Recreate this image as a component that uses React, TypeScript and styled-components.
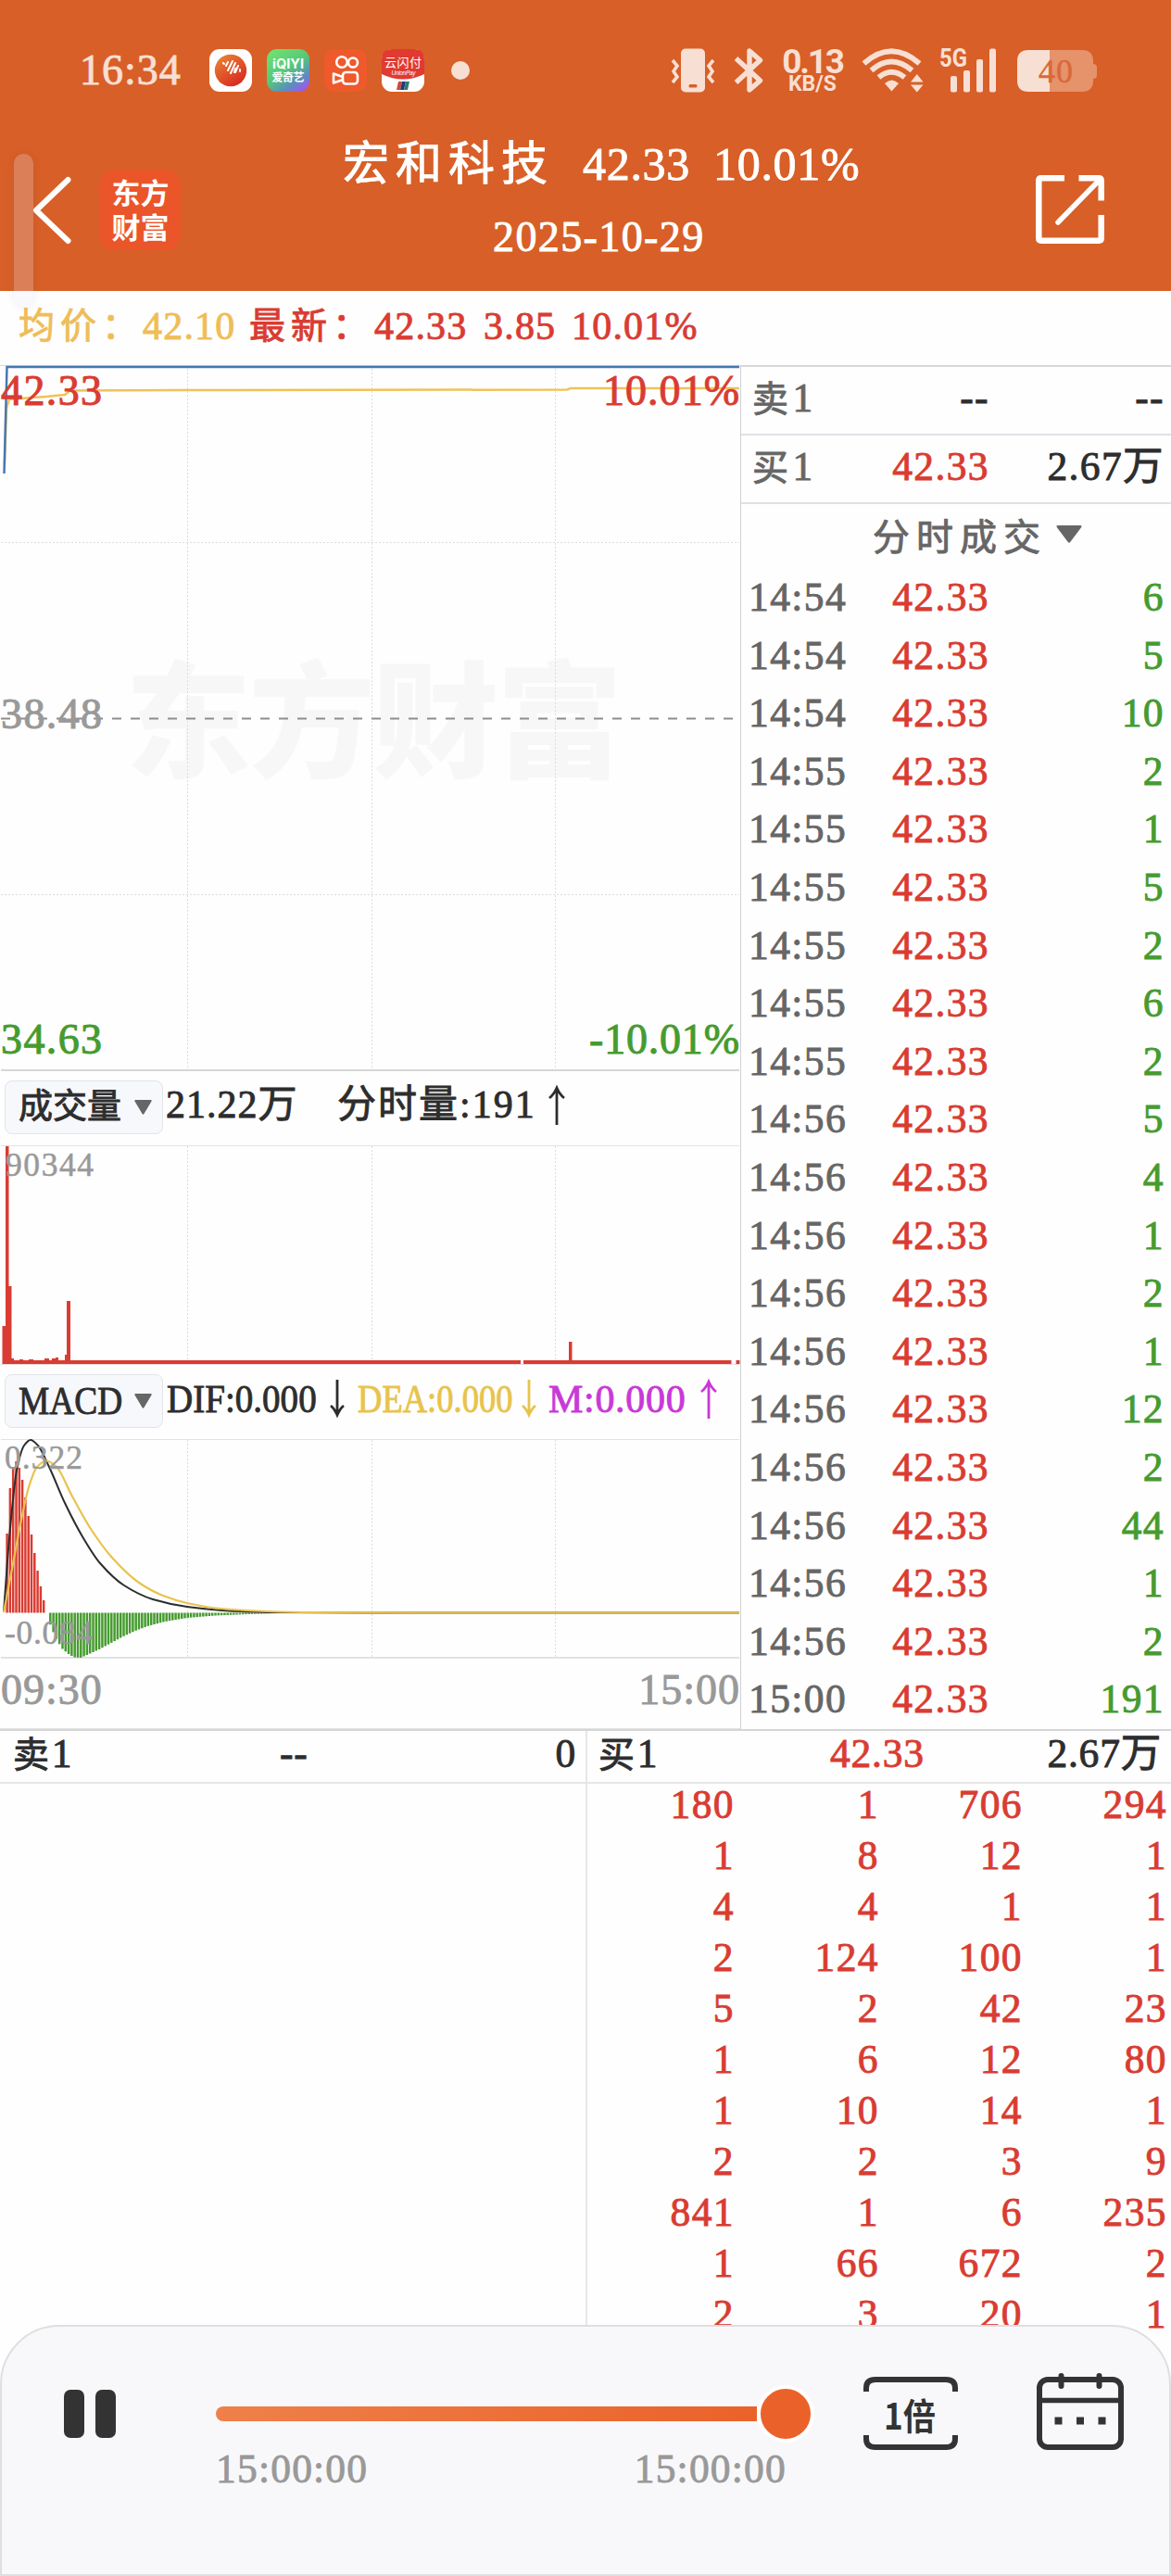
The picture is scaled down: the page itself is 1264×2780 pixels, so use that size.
import React, { ReactElement } from "react";
import styled, { createGlobalStyle } from "styled-components";

const RED = "#d93c32";
const GREEN = "#469b2f";
const SERIF = `"Liberation Serif", "Noto Sans CJK SC", serif`;

type Point = [number, number];

const trades: [string, number][] = [
	["14:54", 6],
	["14:54", 5],
	["14:54", 10],
	["14:55", 2],
	["14:55", 1],
	["14:55", 5],
	["14:55", 2],
	["14:55", 6],
	["14:55", 2],
	["14:56", 5],
	["14:56", 4],
	["14:56", 1],
	["14:56", 2],
	["14:56", 1],
	["14:56", 12],
	["14:56", 2],
	["14:56", 44],
	["14:56", 1],
	["14:56", 2],
	["15:00", 191],
];

const queue = [
	[180, 1, 706, 294],
	[1, 8, 12, 1],
	[4, 4, 1, 1],
	[2, 124, 100, 1],
	[5, 2, 42, 23],
	[1, 6, 12, 80],
	[1, 10, 14, 1],
	[2, 2, 3, 9],
	[841, 1, 6, 235],
	[1, 66, 672, 2],
	[2, 3, 20, 1],
];

const difPoints: Point[] = [
	[4, 1740], [10, 1660], [18, 1587], [26, 1560], [33, 1554], [41, 1560], [53, 1583],
	[70, 1622], [90, 1660], [108, 1687], [134, 1711], [165, 1726], [202, 1734], [248, 1738.5],
	[289, 1740], [400, 1740.5], [798, 1740.5],
];
const deaPoints: Point[] = [
	[4, 1740], [13, 1693], [23, 1640], [31, 1605], [40, 1583], [50, 1576.5], [61, 1583], [77, 1613],
	[98, 1650], [121, 1681], [150, 1708], [176, 1722], [202, 1730], [238, 1736], [289, 1739],
	[336, 1740], [450, 1740.5], [798, 1740.5],
];
const redTops = [1655, 1606, 1583, 1577, 1584, 1597, 1616, 1636, 1656, 1676, 1695, 1712, 1727];
const greenShape: Point[] = [
	[53, 1750], [57, 1760], [60, 1767], [64, 1774], [67, 1779], [74, 1785], [80, 1788.5],
	[87, 1789], [94, 1786], [107, 1780], [120, 1773], [133, 1766], [146, 1760], [159, 1755],
	[178, 1750], [202, 1746], [232, 1743.5], [268, 1742], [300, 1741],
];

// monotone cubic through the points, so the curve never overshoots
function smooth(points: Point[]): string {
	const slopes = points.slice(1).map((p, i) => (p[1] - points[i][1]) / (p[0] - points[i][0]));
	const tangents = points.map((_, i) => {
		if (i === 0) return slopes[0];
		if (i === points.length - 1) return slopes[i - 1];
		const a = slopes[i - 1];
		const b = slopes[i];
		return a * b <= 0 ? 0 : (2 * a * b) / (a + b);
	});
	let d = `M${points[0].join(" ")}`;
	for (let i = 1; i < points.length; i++) {
		const [x0, y0] = points[i - 1];
		const [x1, y1] = points[i];
		const h = (x1 - x0) / 3;
		d += ` C${x0 + h} ${y0 + tangents[i - 1] * h} ${x1 - h} ${y1 - tangents[i] * h} ${x1} ${y1}`;
	}
	return d;
}

function valueAt(points: Point[], x: number): number {
	for (let i = 1; i < points.length; i++) {
		const [x0, y0] = points[i - 1];
		const [x1, y1] = points[i];
		if (x <= x1) return y0 + ((y1 - y0) * (x - x0)) / (x1 - x0);
	}
	return points[points.length - 1][1];
}

const GlobalStyle = createGlobalStyle`
	* { box-sizing: border-box; }
	body {
		margin: 0;
		background: #fff;
		font-family: ${SERIF};
		color: #2d2d2d;
	}
	svg { display: block; flex-shrink: 0; overflow: visible; }
	svg text { font-family: ${SERIF}; }
`;

const Screen = styled.div`
	position: relative;
	width: 1264px;
	height: 2780px;
	overflow: hidden;
	display: flex;
	flex-direction: column;
	background: #fefefe;
	-webkit-text-stroke: 0.9px currentColor;
`;
const Top = styled.div`
	background: #d85f27;
	height: 314px;
	flex-shrink: 0;
`;
const StatusBar = styled.div`
	height: 152px;
	padding: 0 80px 0 86px;
	display: flex;
	align-items: center;
	color: #f8dfd3;
	svg text { -webkit-text-stroke: 0; }
`;
const Clock = styled.div`
	width: 140px;
	font-size: 46px;
	letter-spacing: 1px;
	line-height: 50px;
`;
const AppIcons = styled.div`
	display: flex;
	align-items: center;
	gap: 16px;
	flex: 1;
`;
const Dot = styled.div`
	width: 20px;
	height: 20px;
	margin-left: 13px;
	border-radius: 50%;
	background: #f8dfd3;
`;
const NetSpeed = styled.div`
	width: 68px;
	margin: 0 19px;
	text-align: center;
	font-family: Roboto, "Liberation Sans", sans-serif;
	font-weight: 700;
	font-size: 37px;
	line-height: 30px;
	letter-spacing: -2.2px;
	white-space: nowrap;
	-webkit-text-stroke: 0;
	small {
		display: block;
		font-size: 23px;
		font-weight: 700;
		line-height: 18px;
		letter-spacing: 0;
	}
`;
const Header = styled.div`
	height: 160px;
	display: grid;
	grid-template-columns: 108px 87px 1fr 146px;
	align-items: start;
	color: #fff;
`;
const BackIcon = styled.svg`
	margin: 38px 0 0 34px;
`;
const Logo = styled.div`
	margin-top: 31px;
	height: 87px;
	border-radius: 16px;
	background: #ea5529;
	display: flex;
	flex-direction: column;
	align-items: center;
	justify-content: center;
	font-family: "Noto Sans CJK SC", sans-serif;
	font-weight: 700;
	font-size: 31px;
	line-height: 37px;
	white-space: nowrap;
	padding-bottom: 4px;
	-webkit-text-stroke: 0;
`;
const Heading = styled.div`
	padding-left: 175px;
`;
const StockTitle = styled.div`
	display: flex;
	font-size: 50px;
	line-height: 50px;
	letter-spacing: 0.7px;
	white-space: nowrap;
`;
const StockName = styled.span`
	width: 259px;
	letter-spacing: 7px;
`;
const StockPrice = styled.span`
	width: 141px;
`;
const TradeDate = styled.div`
	margin-left: 162px;
	margin-top: 29px;
	font-size: 46px;
	line-height: 50px;
	letter-spacing: 1.4px;
`;
const ShareIcon = styled.svg`
	margin: 37px 0 0 0;
`;
const EdgeHandle = styled.div`
	position: absolute;
	left: 15px;
	top: 166px;
	width: 21px;
	height: 165px;
	border-radius: 11px;
	background: rgba(228, 232, 250, 0.24);
	box-shadow: 0 0 10px rgba(60, 60, 100, 0.09);
`;
const QuoteLine = styled.div`
	height: 80px;
	flex-shrink: 0;
	padding: 12px 0 0 20px;
	display: flex;
	font-size: 42px;
	line-height: 52px;
	color: ${RED};
	white-space: nowrap;
`;
const Quote = styled.span<{ $w: number; $avg?: boolean; $label?: boolean }>`
	width: ${(p) => p.$w}px;
	color: ${(p) => (p.$avg ? "#efbd58" : "inherit")};
	font-size: ${(p) => (p.$label ? 39 : 42)}px;
	letter-spacing: ${(p) => (p.$label ? 6 : 1.2)}px;
`;
const Market = styled.div`
	display: flex;
	height: 1474px;
	flex-shrink: 0;
	border-bottom: 2px solid #d5d5d5;
`;
const Charts = styled.div`
	width: 799px;
	height: 1472px;
	overflow: hidden;
`;
const IndicatorBar = styled.div<{ $h: number; $line: number }>`
	height: ${(p) => p.$h}px;
	padding: 9px 0 0 5px;
	display: flex;
	align-items: flex-start;
	font-size: 42px;
	line-height: ${(p) => p.$line}px;
	white-space: nowrap;
`;
const IndicatorButton = styled.div<{ $cjk?: boolean }>`
	width: 171px;
	height: 58px;
	padding: 0 11px 0 14px;
	border: 1px solid #e3e4e7;
	border-radius: 8px;
	background: #f7f8fb;
	display: flex;
	align-items: center;
	justify-content: space-between;
	font-size: ${(p) => (p.$cjk ? 37 : 43)}px;
	line-height: 54px;
`;
// long labels are condensed horizontally so that the row fits the chart
const Condensed = styled.span<{ $w: number; $scale: number }>`
	display: block;
	width: ${(p) => p.$w}px;
	transform: scaleX(${(p) => p.$scale});
	transform-origin: left center;
`;
const Indicator = styled(Condensed)<{ $left: number; $color?: string; $ls?: number }>`
	margin-left: ${(p) => p.$left}px;
	color: ${(p) => p.$color || "#2d2d2d"};
	letter-spacing: ${(p) => p.$ls || 0}px;
`;
const ArrowSvg = styled.svg`
	margin-top: 6px;
`;
const TimeAxis = styled.div`
	height: 77px;
	padding: 9px 0 0 1px;
	display: flex;
	justify-content: space-between;
	font-size: 46px;
	line-height: 50px;
	letter-spacing: 1px;
	color: #999;
	border-bottom: 2px solid #e4e4e4;
`;
const Side = styled.div`
	flex: 1;
	border-left: 1px solid #d0d0d5;
	border-top: 2px solid #d6d6dc;
	font-size: 43.5px;
	letter-spacing: 1.4px;
`;
const SideRow = styled.div<{ $h: number; $line?: boolean }>`
	height: ${(p) => p.$h}px;
	line-height: ${(p) => (p.$line ? 66 : 62.6)}px;
	padding: 0 7px 0 8px;
	display: grid;
	grid-template-columns: 115px 145px 1fr;
	border-bottom: ${(p) => (p.$line ? "2px solid #e0e0e5" : "none")};
	white-space: nowrap;
`;
const SideCell = styled.span<{ $color: string; $right?: boolean }>`
	color: ${(p) => p.$color};
	text-align: ${(p) => (p.$right ? "right" : "left")};
	em {
		font-style: normal;
		font-size: 39px;
		margin: 0 3px 0 4px;
	}
`;
const TradesTitle = styled.div`
	height: 69px;
	display: flex;
	align-items: center;
	gap: 10px;
	padding: 0 0 4px 142px;
	font-size: 40px;
	letter-spacing: 7px;
	color: #666;
`;
const Depth = styled.div`
	flex: 1;
	display: grid;
	grid-template-columns: 632px 632px;
	font-size: 43.5px;
`;
const DepthSide = styled.div`
	& + & {
		border-left: 2px solid #e6e6e8;
	}
`;
const DepthHead = styled.div<{ $buy?: boolean }>`
	height: 57px;
	padding: 0 10px 0 ${(p) => (p.$buy ? 12 : 14)}px;
	border-bottom: 2px solid #e6e6e6;
	display: grid;
	grid-template-columns: ${(p) => (p.$buy ? "250px 1fr auto" : "288px 1fr auto")};
	line-height: 48px;
	letter-spacing: 0.8px;
	em {
		font-style: normal;
		font-size: 39px;
		margin-right: 2px;
	}
`;
const Red = styled.span`
	color: ${RED};
`;
const QueueGrid = styled.div`
	padding-right: 4px;
	display: grid;
	grid-template-columns: 159px 156px 155px 1fr;
	row-gap: 11px;
	line-height: 44px;
	text-align: right;
	letter-spacing: 1.4px;
	color: ${RED};
`;
const Player = styled.div`
	position: absolute;
	left: 0;
	right: 0;
	top: 2509px;
	height: 271px;
	border: 2px solid #dfdfe1;
	border-radius: 64px 64px 0 0;
	background: #f8f8fa;
	display: grid;
	grid-template-columns: 231px 646px 1fr;
`;
const Pause = styled.div`
	display: flex;
	gap: 12px;
	padding: 68px 0 0 67px;
`;
const PauseBar = styled.div`
	width: 22px;
	height: 52px;
	border-radius: 7px;
	background: #333;
`;
const SliderBox = styled.div`
	padding-top: 63px;
`;
const SliderRow = styled.div`
	display: flex;
	align-items: center;
`;
const Track = styled.div`
	flex: 1;
	height: 16px;
	border-radius: 8px 0 0 8px;
	background: linear-gradient(90deg, #ef8049, #ea622a);
`;
const Knob = styled.div`
	width: 62px;
	height: 62px;
	border-radius: 50%;
	border: 4px solid #fff;
	background: #ea622a;
`;
const SliderTimes = styled.div`
	display: flex;
	justify-content: space-between;
	padding: 0 30px 0 0;
	font-size: 43.5px;
	line-height: 57px;
	letter-spacing: 1.2px;
	color: #999;
`;
const PlayerActions = styled.div`
	display: flex;
	gap: 84px;
	padding: 48px 0 0 53px;
	svg text { -webkit-text-stroke: 0; }
`;

function Caret({ w, h }: { w: number; h: number }): ReactElement {
	return (
		<svg width={w} height={h} viewBox="0 0 20 16" preserveAspectRatio="none">
			<path d="M1.5 0H18.5Q20.5 0 19.2 2L11 15Q10 16.5 9 15L.8 2Q-.5 0 1.5 0Z" fill="#666" />
		</svg>
	);
}

function Arrow({ up, color }: { up?: boolean; color: string }): ReactElement {
	return (
		<ArrowSvg width="18" height="42" viewBox="0 0 18 42" fill="none" stroke={color} strokeWidth="2.8">
			<path d={up ? "M9 42V2M1 13Q6 9 9 2Q12 9 17 13" : "M9 0V38M2 28Q6 31 9 38Q12 31 16 28"} />
		</ArrowSvg>
	);
}

function VGrid({ y1, y2 }: { y1: number; y2: number }): ReactElement {
	return (
		<g stroke="#dcdcdc" strokeWidth="1" strokeDasharray="2 2">
			{[202.5, 401.5, 599.5].map((x) => (
				<path key={x} d={`M${x} ${y1}V${y2}`} />
			))}
		</g>
	);
}

function StatusIcons(): ReactElement {
	return (
		<>
			<svg width="100" height="48" viewBox="727 52 100 48" fill="#f8dfd3">
				<rect x="738" y="52.5" width="26" height="47" rx="5" />
				<rect x="746.5" y="91" width="9" height="3.5" rx="1.5" fill="#d85f27" />
				<g fill="none" stroke="#f8dfd3" strokeWidth="3.6">
					<path d="M729 65l5 6-4 6 4 6-5 6M773 65l-5 6 4 6-4 6 5 6" />
					<path d="M797.5 63L823.500 87 812 97V55L823.500 65 797.5 89" strokeWidth="5.4" strokeLinejoin="round" />
				</g>
			</svg>
			<NetSpeed>
				0.13
				<small>KB/S</small>
			</NetSpeed>
			<svg width="146" height="48" viewBox="931 52 146 48" fill="#f8dfd3">
				<g fill="none" stroke="#f8dfd3" strokeWidth="5.8">
					<path d="M933.5 68.500Q963 42 993.5 68.500" />
					<path d="M941.5 76Q963 57 985.5 76" />
					<path d="M949.5 83.500Q963 72 977.5 83.500" />
				</g>
				<path d="M956 90Q963.5 83 971 90L963.5 98.500Z" />
				<path d="M984 88.500h13.500l-6.700-8.500zM984 91.500h13.500l-6.700 8z" />
				<rect x="1027" y="82" width="7" height="17.5" rx="2" />
				<rect x="1041" y="76" width="7" height="23.5" rx="2" />
				<rect x="1055" y="64" width="7" height="35.5" rx="2" />
				<rect x="1069" y="52.5" width="7" height="47" rx="2" />
				<text x="1015" y="72" fontSize="28" fontWeight="700" textLength="30" lengthAdjust="spacingAndGlyphs" style={{ fontFamily: "Roboto, sans-serif" }}>5G</text>
			</svg>
			<svg width="108" height="48" viewBox="1076 52 108 48">
				<path d="M1133 54h35q12 0 12 12v3q4 0 4 4v8q0 4-4 4v2q0 12-12 12h-35z" fill="#e6926b" />
				<path d="M1110 54h23v45h-23q-12 0-12-12v-21q0-12 12-12z" fill="#f8dfd3" />
				<text x="1121" y="89" fontSize="36" textLength="37" fill="#d8693a" stroke="#d8693a" strokeWidth=".5">40</text>
			</svg>
		</>
	);
}

function AppRow(): ReactElement {
	return (
		<AppIcons>
			<svg width="46" height="46" viewBox="0 0 46 46">
				<defs>
					<linearGradient id="music" x1="0" y1="0" x2=".7" y2="1">
						<stop offset="0" stopColor="#ea8b35" />
						<stop offset="1" stopColor="#d92a20" />
					</linearGradient>
				</defs>
				<rect width="46" height="46" rx="11" fill="#fff" />
				<circle cx="23" cy="23" r="17.2" fill="url(#music)" />
				<path d="M15 15l1 1M20 14l-2 4M25 13l-5 10M28 15l-5 11M28 21l-1 4M31 18l-3 7M33 22l0 2" stroke="#fff" strokeWidth="2" strokeLinecap="round" />
			</svg>
			<svg width="46" height="46" viewBox="0 0 46 46">
				<defs>
					<linearGradient id="iqiyi" x1=".2" y1="0" x2=".9" y2="1">
						<stop offset="0" stopColor="#6fe070" />
						<stop offset=".45" stopColor="#56c878" />
						<stop offset=".75" stopColor="#5b8dbf" />
						<stop offset="1" stopColor="#b04cf5" />
					</linearGradient>
				</defs>
				<rect width="46" height="46" rx="11" fill="url(#iqiyi)" />
				<text x="6" y="21" fontSize="14" fontWeight="700" fill="#fff" textLength="34" lengthAdjust="spacingAndGlyphs" style={{ fontFamily: "Inter, sans-serif" }}>iQIYI</text>
				<text x="5.5" y="35" fontSize="12" fontWeight="700" fill="#fff" textLength="35" style={{ fontFamily: "Noto Sans CJK SC, sans-serif" }}>爱奇艺</text>
			</svg>
			<svg width="46" height="46" viewBox="0 0 46 46">
				<rect width="46" height="46" rx="11" fill="#ee5a2b" />
				<g fill="none" stroke="#fff" strokeWidth="2.6">
					<circle cx="19" cy="14" r="5.8" />
					<circle cx="31" cy="14.5" r="5" />
					<rect x="20" y="25" width="16" height="12.5" rx="3.5" />
					<path d="M20 30L10 26.500V36.500L20 33" strokeLinejoin="round" />
				</g>
			</svg>
			<svg width="46" height="46" viewBox="0 0 46 46">
				<rect width="46" height="46" rx="11" fill="#fff" />
				<path d="M11 0H35Q46 0 46 11V27Q23 38 0 27V11Q0 0 11 0Z" fill="#e03a31" />
				<text x="3" y="19" fontSize="13" fill="#fff" textLength="40" style={{ fontFamily: "Noto Sans CJK SC, sans-serif" }}>云闪付</text>
				<text x="10.5" y="27.5" fontSize="6.5" fontStyle="italic" fill="#fff" textLength="26" style={{ fontFamily: "Liberation Sans, sans-serif" }}>UnionPay</text>
				<path d="M18 35h4l-2 9h-4z" fill="#d2473f" />
				<path d="M22 35h4l-2 9h-4z" fill="#1c3f75" />
				<path d="M26 35h4l-2 9h-4z" fill="#2f7a74" />
			</svg>
			<Dot />
		</AppIcons>
	);
}

function PriceChart(): ReactElement {
	return (
		<svg width="799" height="763" viewBox="0 394 799 763">
			<text x="135" y="829" fontSize="136" fontWeight="900" fill="#f7f7f7" stroke="none" textLength="537" style={{ fontFamily: "Noto Sans CJK SC, sans-serif", WebkitTextStroke: "0" }}>东方财富</text>
			<VGrid y1={398} y2={1154} />
			<path d="M1 585.500H798M1 965.500H798" stroke="#dcdcdc" strokeDasharray="2 2" />
			<path d="M0 394.500H799" stroke="#d6d6dc" />
			<path d="M1 1155H798" stroke="#d6d6d6" strokeWidth="2" />
			<path d="M1 775.500H798" stroke="#8d8d8d" strokeWidth="2" strokeDasharray="10 10" />
			<path d="M5 500L7 440L10 431L50 428L70 426L76 421.500L200 421L612 420.500L616 419L798 419" fill="none" stroke="#efc25b" strokeWidth="2.5" />
			<path d="M4.500 511L7.500 396H798" fill="none" stroke="#4878b0" strokeWidth="2.5" />
			<g fontSize="46" strokeWidth="1">
				<text x="1" y="437" fill={RED} stroke={RED} textLength="109">42.33</text>
				<text x="651" y="437" fill={RED} stroke={RED} textLength="147">10.01%</text>
				<text x="1" y="786" fill="#999" stroke="#999" textLength="109">38.48</text>
				<text x="1" y="1137" fill={GREEN} stroke={GREEN} textLength="109">34.63</text>
				<text x="636" y="1137" fill={GREEN} stroke={GREEN} textLength="162">-10.01%</text>
			</g>
		</svg>
	);
}

function VolumeChart(): ReactElement {
	return (
		<svg width="799" height="238" viewBox="0 1236 799 238">
			<VGrid y1={1237} y2={1470} />
			<path d="M1 1236.500H798" stroke="#e2e2e2" />
			<path d="M1 1472.500H798" stroke="#eadada" />
			<g fill={RED}>
				<path d="M2.500 1431H6V1237H9.500V1388H12.500V1472H2.500z" />
				<path d="M12 1466h3v2h6v-1h4v1h6v-1h5v1h12v-2h5v2h3v-2h4v-1h3v3h7v-6h2V1404h4V1468H562v4H12z" />
				<path d="M565 1468h49v-20h3.500v20H789.500v4H565zM794.500 1468h4v4h-4z" />
			</g>
			<text x="6" y="1268.5" fontSize="35.5" fill="#999" stroke="#999" strokeWidth=".5" textLength="95">90344</text>
		</svg>
	);
}

function MacdChart(): ReactElement {
	const greenBars = Array.from({ length: 76 }, (_, i) => 54.3 + i * 3.3);
	return (
		<svg width="799" height="238" viewBox="0 1552 799 238">
			<VGrid y1={1554} y2={1788} />
			<path d="M1 1553.500H798" stroke="#e2e2e2" />
			<path d="M1 1789H798" stroke="#e2e2e2" strokeWidth="2" />
			<g stroke={RED} strokeWidth="2.5">
				{redTops.map((y, i) => (
					<path key={y} d={`M${7.6 + i * 3.3} 1740.500V${y}`} />
				))}
			</g>
			<g stroke={GREEN} strokeWidth="2.5">
				{greenBars.map((x) => (
					<path key={x} d={`M${x} 1740.500V${valueAt(greenShape, x)}`} />
				))}
			</g>
			<path d={smooth(difPoints)} fill="none" stroke="#2d2d2d" strokeWidth="2" />
			<path d={smooth(deaPoints)} fill="none" stroke="#e8c34c" strokeWidth="2.2" />
			<g fontSize="35.5" fill="#999" stroke="#999" strokeWidth=".5">
				<text x="5" y="1585" textLength="84">0.322</text>
				<text x="5" y="1774" textLength="95">-0.084</text>
			</g>
		</svg>
	);
}

export default function App(): ReactElement {
	return (
		<Screen>
			<GlobalStyle />
			<Top>
				<StatusBar>
					<Clock>16:34</Clock>
					<AppRow />
					<StatusIcons />
				</StatusBar>
				<Header>
					<BackIcon width="44" height="74" viewBox="0 0 44 74" fill="none">
						<path d="M39.500 4L5 37L39.500 70" stroke="#fff" strokeWidth="6" strokeLinecap="round" strokeLinejoin="round" />
					</BackIcon>
					<Logo>
						<span>东方</span>
						<span>财富</span>
					</Logo>
					<Heading>
						<StockTitle>
							<StockName>宏和科技</StockName>
							<StockPrice>42.33</StockPrice>
							<span>10.01%</span>
						</StockTitle>
						<TradeDate>2025-10-29</TradeDate>
					</Heading>
					<ShareIcon width="74" height="74" viewBox="0 0 74 74" fill="none" stroke="#fff" strokeWidth="6.5">
						<path d="M31 3.300H6Q3.300 3.300 3.300 6V68Q3.300 70.700 6 70.700H68Q70.700 70.700 70.700 68V43" />
						<path d="M46.500 3.300H68Q70.700 3.300 70.700 6V27.500" />
						<path d="M24 51L68 6" strokeWidth="5.5" strokeLinecap="round" />
					</ShareIcon>
				</Header>
			</Top>
			<EdgeHandle />
			<QuoteLine>
				<Quote $w={134} $avg $label>均价：</Quote>
				<Quote $w={115} $avg>42.10</Quote>
				<Quote $w={135} $label>最新：</Quote>
				<Quote $w={118}>42.33</Quote>
				<Quote $w={95}>3.85</Quote>
				<Quote $w={140}>10.01%</Quote>
			</QuoteLine>
			<Market>
				<Charts>
					<PriceChart />
					<IndicatorBar $h={79} $line={52}>
						<IndicatorButton $cjk>
							成交量
							<Caret w={19} h={16} />
						</IndicatorButton>
						<Indicator $left={3} $w={185} $scale={1} $ls={1}>21.22万</Indicator>
						<Indicator $left={0} $w={228} $scale={1} $ls={2}>分时量:191</Indicator>
						<Arrow up color="#2d2d2d" />
					</IndicatorBar>
					<VolumeChart />
					<IndicatorBar $h={78} $line={55}>
						<IndicatorButton>
							<Condensed $w={112} $scale={0.87}>MACD</Condensed>
							<Caret w={19} h={16} />
						</IndicatorButton>
						<Indicator $left={4} $w={175} $scale={0.93}>DIF:0.000</Indicator>
						<Arrow color="#2d2d2d" />
						<Indicator $left={13} $w={176} $scale={0.87} $color="#e8c34c">DEA:0.000</Indicator>
						<Arrow color="#e8c34c" />
						<Indicator $left={12} $w={164} $scale={1} $ls={0.7} $color="#c839d8">M:0.000</Indicator>
						<Arrow up color="#c839d8" />
					</IndicatorBar>
					<MacdChart />
					<TimeAxis>
						<span>09:30</span>
						<span>15:00</span>
					</TimeAxis>
				</Charts>
				<Side>
					<SideRow $h={74} $line>
						<SideCell $color="#666"><em>卖</em>1</SideCell>
						<SideCell $color="#2d2d2d" $right>--</SideCell>
						<SideCell $color="#2d2d2d" $right>--</SideCell>
					</SideRow>
					<SideRow $h={74} $line>
						<SideCell $color="#666"><em>买</em>1</SideCell>
						<SideCell $color={RED} $right>42.33</SideCell>
						<SideCell $color="#2d2d2d" $right>2.67万</SideCell>
					</SideRow>
					<TradesTitle>
						分时成交
						<Caret w={28} h={19} />
					</TradesTitle>
					{trades.map(([time, lots], i) => (
						<SideRow key={i} $h={62.6}>
							<SideCell $color="#666">{time}</SideCell>
							<SideCell $color={RED} $right>42.33</SideCell>
							<SideCell $color={GREEN} $right>{lots}</SideCell>
						</SideRow>
					))}
				</Side>
			</Market>
			<Depth>
				<DepthSide>
					<DepthHead>
						<span><em>卖</em>1</span>
						<span>--</span>
						<span>0</span>
					</DepthHead>
				</DepthSide>
				<DepthSide>
					<DepthHead $buy>
						<span><em>买</em>1</span>
						<Red>42.33</Red>
						<span>2.67万</span>
					</DepthHead>
					<QueueGrid>
						{queue.flat().map((n, i) => (
							<span key={i}>{n}</span>
						))}
					</QueueGrid>
				</DepthSide>
			</Depth>
			<Player>
				<Pause>
					<PauseBar />
					<PauseBar />
				</Pause>
				<SliderBox>
					<SliderRow>
						<Track />
						<Knob />
					</SliderRow>
					<SliderTimes>
						<span>15:00:00</span>
						<span>15:00:00</span>
					</SliderTimes>
				</SliderBox>
				<PlayerActions>
					<svg width="103" height="86" viewBox="933 2559 103 86" fill="none" stroke="#333" strokeWidth="6">
						<path d="M936 2581V2577Q936 2568 946 2568H1022Q1032 2568 1032 2577V2581M936 2628V2632Q936 2641 946 2641H1022Q1032 2641 1032 2632V2628" />
						<text x="955" y="2622" fontSize="39" fontWeight="700" fill="#333" stroke="none" textLength="56" lengthAdjust="spacingAndGlyphs" style={{ fontFamily: "Noto Sans CJK SC, sans-serif" }}>1倍</text>
					</svg>
					<svg width="95" height="86" viewBox="1120 2559 95 86" fill="none" stroke="#333" strokeWidth="6">
						<rect x="1123" y="2568" width="88" height="73" rx="9" />
						<path d="M1123 2590.500H1211" strokeWidth="5.5" />
						<path d="M1146.500 2564V2575M1187.500 2564V2575" strokeLinecap="round" />
						<path d="M1139.500 2612.500h8M1163 2612.500h8M1186.500 2612.500h8" strokeWidth="8" />
					</svg>
				</PlayerActions>
			</Player>
		</Screen>
	);
}
